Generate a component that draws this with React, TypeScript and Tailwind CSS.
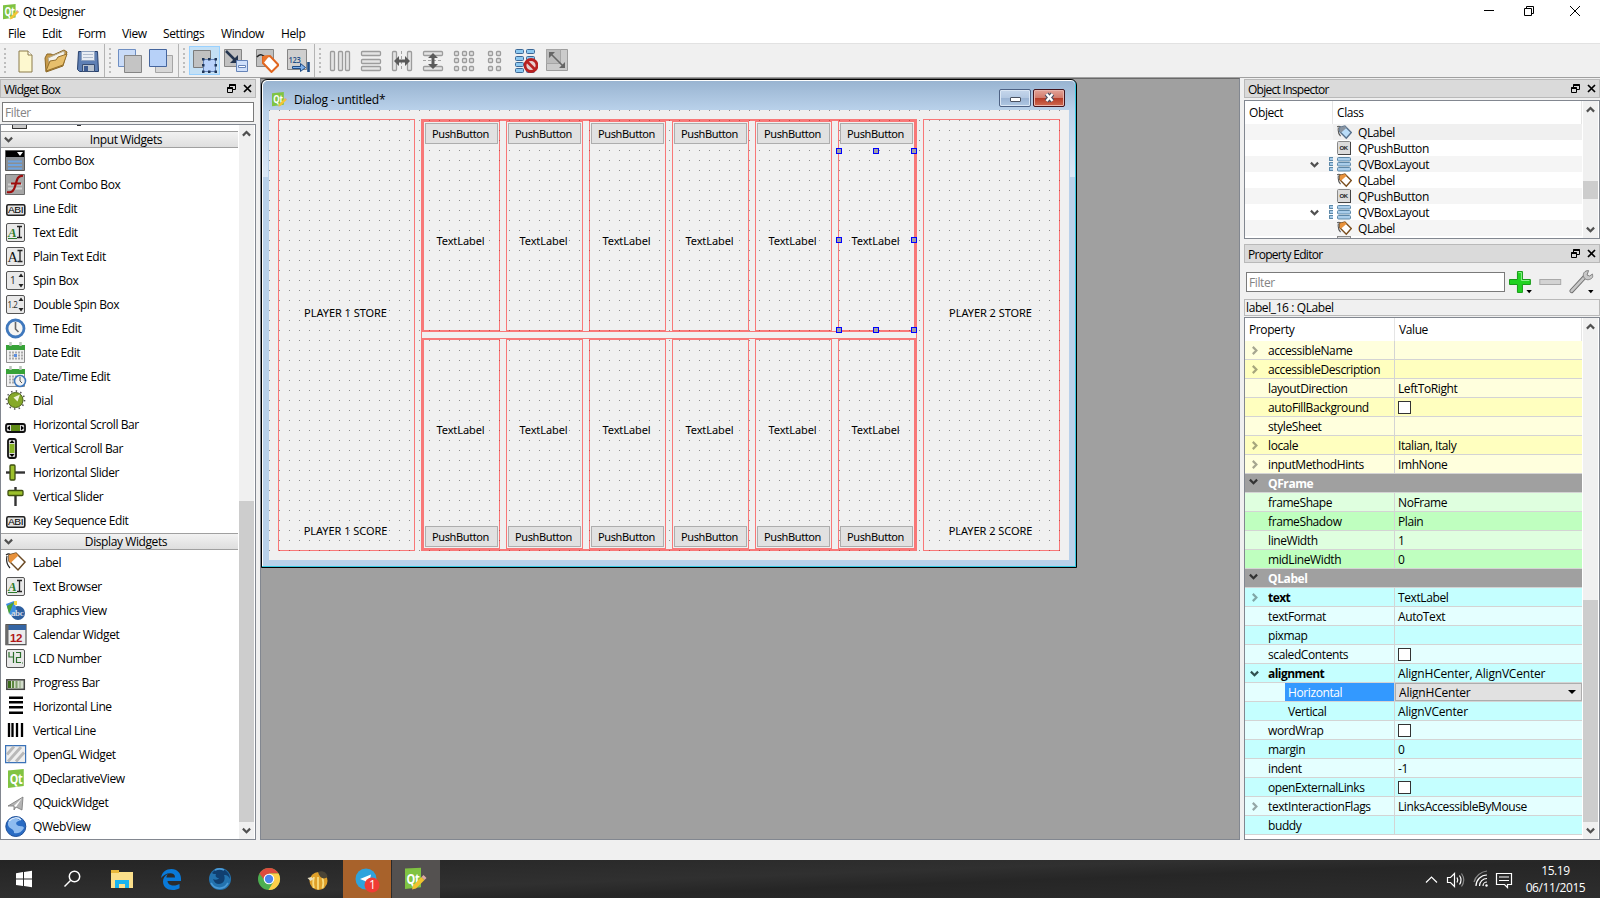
import React from "react";

type Kids = { children?: React.ReactNode };

/* ---------- shared pieces ---------- */

function Chevron({ dir, color = "#505050" }: { dir: "up" | "down" | "right"; color?: string }) {
  const d = dir === "up" ? "M.9 6.600 4.500 3 8.100 6.600" : dir === "down" ? "M.9 2.600 4.500 6.200 8.100 2.600" : "M2.800.9 6.400 4.500 2.800 8.100";
  return (
    <svg width="9" height="9" viewBox="0 0 9 9" className="block shrink-0">
      <path d={d} fill="none" stroke={color} strokeWidth="2.200" />
    </svg>
  );
}

function QtLogo({ size = 16, pencil = true }: { size?: number; pencil?: boolean }) {
  return (
    <svg width={size} height={size} viewBox="0 0 16 16" className="block shrink-0">
      <path d="M0 1.200 12.600 0v13.600L0 15.200z" fill="#80c342" />
      <text x="1.400" y="11.800" fontFamily="Open Sans, sans-serif" fontWeight="700" fontSize="11.500" fill="#fff" textLength="10" lengthAdjust="spacingAndGlyphs">Qt</text>
      {pencil && (
        <>
          <path d="m6.800 15.600.8-2.800L13.800 6.600l1.900 1.700-6.300 6.400z" fill="#f3c536" />
          <path d="m13.200 7 1-1 1.800 1.700-1 1.100z" fill="#d9a3a0" />
        </>
      )}
    </svg>
  );
}

function DockTitle({ title }: { title: string }) {
  return (
    <div className="flex h-[19px] shrink-0 items-center border border-[#b9b9b9] bg-[#dadada] pl-[3px] pr-[3px]">
      <span className="grow pt-[2px] tracking-[-0.72px]">{title}</span>
      <svg width="25" height="9" viewBox="0 0 25 9" className="block" fill="none" stroke="#000">
        <path d="M2.500 3V.5h6v5H6" />
        <path d="M2.500 1h6M.5 4h5" strokeWidth="2" />
        <path d="M.5 3.500h5v5h-5z" />
        <path d="m17 1 7 7m0-7-7 7" strokeWidth="1.700" />
      </svg>
    </div>
  );
}

function FilterBox() {
  return <div className="flex h-5 grow items-center border border-[#7a7a7a] bg-white pl-[2px] pt-[2px] text-[#848484]">Filter</div>;
}

/* ---------- toolbar ---------- */

function Handle() {
  return (
    <svg width="3" height="28" viewBox="0 0 3 28" className="block">
      {[1, 6, 10, 15, 19, 24].map((y) => (
        <rect key={y} x="0" y={y} width="2" height="2" fill="#bdbdbd" />
      ))}
    </svg>
  );
}

function Sep() {
  return <div className="h-[33px] w-px bg-[#b4b4b4]" />;
}

function Tool({ children, on }: Kids & { on?: boolean }) {
  return (
    <div className={on ? "flex h-[29px] w-[31px] items-center justify-center border border-[#99d1ff] bg-[#c4e0f5]" : "flex h-[29px] w-[31px] items-center justify-center"}>
      <svg width="24" height="24" viewBox="0 0 24 24" className="block">
        {children}
      </svg>
    </div>
  );
}

function Cells({ list }: { list: number[][] }) {
  return (
    <g fill="#e4e4e4" stroke="#9c9c9c" strokeWidth="1.300">
      {list.map(([x, y, w, h]) => (
        <rect key={`${x}-${y}`} x={x + 0.5} y={y + 0.5} width={w} height={h} rx="1" />
      ))}
    </g>
  );
}

function Toolbar() {
  return (
    <div className="flex h-[34px] shrink-0 items-center border-t border-[#e2e2e2] bg-[#f0f0f0] pl-1">
      <Handle />
      <div className="ml-[2px] flex">
        <Tool>
          <path d="M6 2h9l4 4v17H6z" fill="#fdf8cf" stroke="#8b7a4a" />
          <path d="M15 2v4h4" fill="#fff" stroke="#8b7a4a" />
        </Tool>
        <Tool>
          <path d="M1 9 3 5h4l2 1L20 1l3 2-4 14L2 23z" fill="#c79a4a" stroke="#8b6827" />
          <path d="M4 9 20 2l1 6-15 9z" fill="#f4f2ea" stroke="#b5ab8e" />
          <path d="M2 22 6 12l6-1 2-3 9-3-4 11z" fill="#e7bf6c" stroke="#96702c" />
        </Tool>
        <Tool>
          <path d="M3.500 2.500h19l1 20h-19l-2-2z" fill="#5e7fb4" stroke="#27406c" />
          <path d="M6.500 2.500h13v9h-13z" fill="#e8edf4" stroke="#8fa3c0" />
          <path d="M8 5.500h10M8 8.500h10" stroke="#b0bccd" />
          <path d="M7.500 15.500h12v7h-12z" fill="#b8c2cf" stroke="#384e74" />
          <path d="M9 17h4v5H9z" fill="#3b5a92" />
        </Tool>
      </div>
      <div className="w-[2px]" />
      <Sep />
      <div className="w-[4px]" />
      <Handle />
      <div className="ml-[2px] flex">
        <Tool>
          <path d="M.5.500h17v17H.5z" fill="#c9dbf7" stroke="#6e8ec2" />
          <path d="M6.500 6.500h17v17h-17z" fill="#c4c4c4" stroke="#858585" />
        </Tool>
        <Tool>
          <path d="M6.500 6.500h17v17h-17z" fill="#d7d7d7" stroke="#a5a5a5" />
          <path d="M.5.500h17v17H.5z" fill="#b7d1f8" stroke="#45659d" />
        </Tool>
      </div>
      <div className="w-[2px]" />
      <Sep />
      <div className="w-[4px]" />
      <Handle />
      <div className="ml-[3px] flex">
        <Tool on>
          <path d="M.5 1.500h17v17H.5z" fill="#c1c1c1" stroke="#7b7b7b" />
          <path d="M10.500 10.500h12v12h-12z" fill="#b9d2fa" stroke="#6684b8" />
          <path d="M9 9h2.500v2.500H9zM15 9h2.500v2.500H15zM21.500 9H24v2.500h-2.500zM9 15h2.500v2.500H9zM21.500 15H24v2.500h-2.500zM9 21.500h2.500V24H9zM15 21.500h2.500V24H15zM21.500 21.500H24V24h-2.500z" fill="#1f3557" />
        </Tool>
        <Tool>
          <path d="M.5.500h17v17H.5z" fill="#c1c1c1" stroke="#858585" />
          <path d="m2 2 9 9" stroke="#24354f" strokeWidth="2.500" />
          <path d="M14 14V6l-8 8z" fill="#24354f" />
          <path d="M12.500 11.500h11v11h-11z" fill="#cfe0fb" stroke="#6684b8" />
          <path d="M14.500 16.500h7v2h-7z" fill="#fff" stroke="#6684b8" />
        </Tool>
        <Tool>
          <path d="M1.500.500h17v17h-17z" fill="#c1c1c1" stroke="#858585" />
          <path d="M2 8c3-4 6-2 9 1" stroke="#222" fill="none" strokeWidth="1.500" />
          <path d="m8 8 7-1 8.500 9-7 7L8 14z" fill="#fff" stroke="#e0651f" strokeWidth="2" />
          <path d="m8 7 7-1-7 9z" fill="#e8742c" />
        </Tool>
        <Tool>
          <path d="M1.500.500h19v20h-19z" fill="#cfcfcf" stroke="#858585" />
          <text x="2.500" y="14" fontFamily="Open Sans, sans-serif" fontSize="9.500" fontWeight="600" fill="#1f4f88" textLength="12" lengthAdjust="spacingAndGlyphs">123</text>
          <path d="M6.500 17.500h8v-3l5 4-5 4v-3h-8z" fill="#7fb0ea" stroke="#1e4c86" />
          <path d="M22.500 13v10" stroke="#1e4c86" strokeWidth="2.600" />
        </Tool>
      </div>
      <div className="w-[1px]" />
      <Sep />
      <div className="w-[4px]" />
      <Handle />
      <div className="ml-[2px] flex">
        <Tool><Cells list={[[2, 2, 4, 19], [10, 2, 4, 19], [17, 2, 4, 19]]} /></Tool>
        <Tool><Cells list={[[2, 2, 19, 4], [2, 10, 19, 4], [2, 17, 19, 4]]} /></Tool>
        <Tool>
          <Cells list={[[2, 2, 4, 19], [17, 2, 4, 19]]} />
          <path d="M11.500 2v20" stroke="#a3a3a3" strokeDasharray="3 2" />
          <path d="m4 12 5-5v3.500h6V7l5 5-5 5v-3.500H9V17z" fill="#5a5a5a" />
        </Tool>
        <Tool>
          <Cells list={[[2, 2, 19, 4], [2, 17, 19, 4]]} />
          <path d="M2 11.500h20" stroke="#a3a3a3" strokeDasharray="3 2" />
          <path d="m12 4-5 5h3.500v6H7l5 5 5-5h-3.500V9H17z" fill="#5a5a5a" />
        </Tool>
        <Tool><Cells list={[2, 9, 17].flatMap((y) => [2, 10, 17].map((x) => [x, y, 4, 4]))} /></Tool>
        <Tool><Cells list={[2, 9, 17].flatMap((y) => [5, 13].map((x) => [x, y, 4, 4]))} /></Tool>
        <Tool>
          <g fill="#8cc8f0" stroke="#3c6896">
            {[0, 7, 13, 19].map((y) => (
              <g key={y}>
                <rect x="1.500" y={y + 0.5} width="8" height="4" rx="1" />
                <rect x="12.500" y={y + 0.5} width="8" height="4" rx="1" />
              </g>
            ))}
          </g>
          <circle cx="17" cy="16.500" r="6" fill="#e8cfcf" stroke="#b92020" strokeWidth="2.800" />
          <path d="m13 12.500 8 8" stroke="#b92020" strokeWidth="2.600" />
        </Tool>
        <Tool>
          <path d="M1.500.500h21v21h-21z" fill="#cbcbcb" stroke="#9d9d9d" />
          <path d="M1.500.500h14v14h-14z" fill="#bcbcbc" stroke="#a5a5a5" />
          <path d="m6 5 12 12" stroke="#666" strokeWidth="1.600" />
          <path d="M4 3h6l-6 6zM20 19h-6l6-6z" fill="#666" />
        </Tool>
      </div>
    </div>
  );
}

/* ---------- widget box ---------- */

function Plate() {
  return <rect x="1.500" y="1.500" width="18" height="18" rx="1.500" fill="#e9e9e9" stroke="#555" />;
}

function CalendarBase() {
  return (
    <>
      <path d="M1.500 3.500h18v17h-18z" fill="#f1f1f1" stroke="#8d8d8d" />
      <path d="M1 3h19v5H1z" fill="#37a237" />
      <path d="M5.500 0v4M15.500 0v4" stroke="#b9c6b9" strokeWidth="2.500" />
      <path d="M4 10.500h14M4 13.500h14M4 16.500h14" stroke="#aaa" strokeWidth="2" strokeDasharray="2 1" />
    </>
  );
}

const serif = "Liberation Serif, serif";

const glyphs: Record<string, React.ReactNode> = {
  combo: (
    <>
      <path d="M.5.500h19v20H.5z" fill="#8b8f94" stroke="#5a5a5a" />
      <path d="M1 1h18v6H1z" fill="#000" />
      <path d="M12 2h6l-3 4z" fill="#fff" />
      <path d="M3 11.500h14M3 15h14M3 18.500h14" stroke="#6fa4e0" strokeWidth="2" />
    </>
  ),
  font: (
    <>
      <path d="M.5.500h19v20H.5z" fill="#a6a6a6" stroke="#6c6c6c" />
      <path d="M3 10.500h14M3 14.500h14" stroke="#cfcfcf" strokeWidth="2" />
      <path d="M18 2c-5-1-6 3-7.500 9S7 19 2 18M6 9.500h10" fill="none" stroke="#9d0d0d" strokeWidth="2.200" />
    </>
  ),
  line: (
    <>
      <rect x="1.800" y="6.800" width="18" height="10.500" rx="1.500" fill="#e4e4e4" stroke="#222" strokeWidth="1.600" />
      <text x="3" y="15" fontFamily="Liberation Sans, sans-serif" fontSize="8.500" fill="#000" textLength="15" lengthAdjust="spacingAndGlyphs">ABI</text>
    </>
  ),
  text: (
    <>
      <Plate />
      <text x="3" y="14.500" fontFamily={serif} fontStyle="italic" fontWeight="700" fontSize="13" fill="#2c7a2c">A</text>
      <path d="M3 16.500h9" stroke="#2c7a2c" />
      <path d="M12 4.500h5M12 15.500h5M14.500 5v10" stroke="#222" strokeWidth="1.300" />
    </>
  ),
  plain: (
    <>
      <Plate />
      <text x="2.500" y="15.500" fontFamily={serif} fontSize="14.500" fill="#111">A</text>
      <path d="M12.500 4.500h5M12.500 15.500h5M15 5v10" stroke="#222" strokeWidth="1.300" />
    </>
  ),
  spin: (
    <>
      <Plate />
      <text x="5" y="14" fontFamily="Noto Sans, sans-serif" fontSize="10" fill="#333">1</text>
      <path d="m13.500 7 2.500-3.500L18.500 7zM13.500 14l2.500 3.500 2.500-3.500z" fill="#222" />
    </>
  ),
  dspin: (
    <>
      <Plate />
      <text x="2.500" y="13.500" fontFamily="Noto Sans, sans-serif" fontSize="8" fill="#333" textLength="10">1.2</text>
      <path d="m13.500 7 2.500-3.500L18.500 7zM13.500 14l2.500 3.500 2.500-3.500z" fill="#222" />
    </>
  ),
  time: (
    <>
      <circle cx="10.500" cy="10.500" r="8.500" fill="#f4f4f2" stroke="#3f78bd" strokeWidth="2.800" />
      <path d="M10.500 4v7l3 3" fill="none" stroke="#666" strokeWidth="1.600" />
    </>
  ),
  date: (
    <>
      <CalendarBase />
      <path d="M9 12h3v3H9z" fill="#5c8fe0" />
    </>
  ),
  datetime: (
    <>
      <CalendarBase />
      <circle cx="15" cy="15" r="5.500" fill="#f2f2f2" stroke="#3f78bd" strokeWidth="1.600" />
      <path d="M15 11v4l2 2" fill="none" stroke="#555" />
    </>
  ),
  dial: (
    <>
      <circle cx="10.500" cy="10" r="9" fill="none" stroke="#555" strokeWidth="1.600" strokeDasharray="1.500 3.200" />
      <circle cx="10.500" cy="10" r="7.500" fill="#86a92a" stroke="#4c6416" />
      <path d="m15 4.500-2.500 7-4-4z" fill="#f0f5d8" />
    </>
  ),
  hscroll: (
    <>
      <rect x="1" y="10" width="19" height="8" rx="2" fill="#d8d8d8" stroke="#111" strokeWidth="1.800" />
      <path d="M6 11h9v6H6z" fill="#5e8a14" />
      <path d="M5 11.500v5L2 14zM16 11.500v5l3-2.500z" fill="#000" />
    </>
  ),
  vscroll: (
    <>
      <rect x="3" y="1" width="8" height="19" rx="2" fill="#d8d8d8" stroke="#111" strokeWidth="1.800" />
      <path d="M4.500 6h5v9h-5z" fill="#86b322" />
      <path d="M4.500 5h5L7 2zM4.500 16h5L7 19z" fill="#000" />
    </>
  ),
  hslider: (
    <>
      <path d="M1 10.500h19" stroke="#333" strokeWidth="2.400" />
      <rect x="5" y="3" width="5" height="15" rx="1" fill="#9cc02c" stroke="#3d4f10" strokeWidth="1.300" />
    </>
  ),
  vslider: (
    <>
      <path d="M10.500 1v19" stroke="#333" strokeWidth="2.400" />
      <rect x="3" y="4.500" width="15" height="5" rx="1" fill="#9cc02c" stroke="#3d4f10" strokeWidth="1.300" />
    </>
  ),
  label: (
    <>
      <path d="M1 3c4-3 5 0 6 4M2 4c-1 5 0 9 3 12" fill="none" stroke="#222" strokeWidth="1.200" />
      <path d="m4 3 7-2 9 9-7 8-9-9z" fill="#fff" stroke="#6b4a24" strokeWidth="1.500" />
      <path d="m4 3 7-2 2.500 2.500L5.500 11 4 9z" fill="#e8923c" />
    </>
  ),
  graphics: (
    <>
      <circle cx="13" cy="13" r="7" fill="#2d5f9f" />
      <path d="M1 4 9 1l3 10-7 4z" fill="#3f8de0" />
      <path d="m2 6 7-4-5 12z" fill="#4aa336" />
      <path d="M9 1h3v4H9z" fill="#f2d84a" />
      <text x="6" y="16" fontFamily={serif} fontWeight="700" fontSize="9" fill="#d4dcea">abc</text>
    </>
  ),
  calendar: (
    <>
      <path d="M1 .6h20v20H1z" fill="#ececec" stroke="#555" strokeWidth="1.200" />
      <path d="M3 1h18v5H3z" fill="#3465a4" />
      <path d="M.5 1h3v20h-3z" fill="#6a6a6a" />
      <text x="5" y="18" fontFamily="Liberation Sans, sans-serif" fontWeight="700" fontSize="11.500" fill="#b01818">12</text>
    </>
  ),
  lcd: (
    <>
      <Plate />
      <path d="M4 4v5h4M8.500 4v11M11 4.500h4.500v5H11.500v5H16M17 15h1" fill="none" stroke="#2c6e2c" strokeWidth="1.200" />
    </>
  ),
  progress: (
    <>
      <rect x="1.800" y="7.800" width="17.500" height="9.500" fill="#d2dccb" stroke="#444" strokeWidth="1.500" />
      <path d="M3 9h3v7H3z" fill="#3c6a1c" />
      <path d="M7 9h2v7H7z" fill="#5c8740" />
      <path d="M10.500 9h2v7h-2z" fill="#7f9f6a" />
      <path d="M14 9h2v7h-2z" fill="#aebfa2" />
    </>
  ),
  hline: <path d="M4 1.700h14M4 6.200h14M4 11.200h14M4 16.700h14" stroke="#000" strokeWidth="2.400" />,
  vline: <path d="M4 3v14M7.500 3v14M12 3v14M17 3v14" stroke="#000" strokeWidth="2.300" />,
  opengl: (
    <>
      <path d="M.6 1.600h20v17H.6z" fill="#efefef" stroke="#3a72b8" strokeWidth="1.200" />
      <path d="m2 10.500 7-8M3 17.500 16 3M11 17.500l8-9" stroke="#b9b9b9" strokeWidth="2.800" />
    </>
  ),
  quick: (
    <>
      <path d="m3 14 15-9-1 13-6-3-2 3v-4z" fill="#b4b4b4" stroke="#777" strokeWidth=".8" />
      <path d="m9 14 8-8-6 9z" fill="#fff" />
    </>
  ),
  web: (
    <>
      <circle cx="10.800" cy="10.500" r="10" fill="#2a6cc4" stroke="#1e4f98" />
      <path d="M3 6c5-5 10-4 12-1-3 0-5 2-3 4s6 0 7 3c-3 5-7 6-10 5 1-4-5-4-6-8z" fill="#8fbcf0" />
      <path d="M4 5c4-4 9-4 12-1" stroke="#dcebfb" fill="none" strokeWidth="1.500" />
    </>
  ),
};

const inputWidgets: [string, string][] = [
  ["combo", "Combo Box"], ["font", "Font Combo Box"], ["line", "Line Edit"], ["text", "Text Edit"],
  ["plain", "Plain Text Edit"], ["spin", "Spin Box"], ["dspin", "Double Spin Box"], ["time", "Time Edit"],
  ["date", "Date Edit"], ["datetime", "Date/Time Edit"], ["dial", "Dial"], ["hscroll", "Horizontal Scroll Bar"],
  ["vscroll", "Vertical Scroll Bar"], ["hslider", "Horizontal Slider"], ["vslider", "Vertical Slider"],
  ["line", "Key Sequence Edit"],
];

const displayWidgets: [string, string][] = [
  ["label", "Label"], ["text", "Text Browser"], ["graphics", "Graphics View"], ["calendar", "Calendar Widget"],
  ["lcd", "LCD Number"], ["progress", "Progress Bar"], ["hline", "Horizontal Line"], ["vline", "Vertical Line"],
  ["opengl", "OpenGL Widget"], ["qt", "QDeclarativeView"], ["quick", "QQuickWidget"], ["web", "QWebView"],
];

function Category({ title }: { title: string }) {
  return (
    <div className="mb-px flex h-[17px] shrink-0 items-center border-y border-[#a0a0a0] bg-gradient-to-b from-[#f2f2f2] to-[#dedede] pl-[3px]">
      <Chevron dir="down" />
      <span className="grow pl-[1px] pt-px text-center">{title}</span>
    </div>
  );
}

function WidgetRow({ icon, name }: { icon: string; name: string }) {
  return (
    <div className="flex h-6 shrink-0 items-center pl-1">
      {icon === "qt" ? (
        <div className="w-[22px] pl-[3px]"><QtLogo size={20} pencil={false} /></div>
      ) : (
        <svg width="22" height="22" viewBox="0 0 22 22" className="block">{glyphs[icon]}</svg>
      )}
      <span className="pl-[6px]">{name}</span>
    </div>
  );
}

function WidgetBox() {
  return (
    <div className="flex w-64 shrink-0 flex-col">
      <DockTitle title="Widget Box" />
      <div className="flex px-[2px] pt-1 pb-[2px]"><FilterBox /></div>
      <div className="flex h-[716px] border border-[#828790] bg-white">
        <div className="flex w-[237px] flex-col overflow-hidden">
          <div className="flex h-[6px] shrink-0 items-start pl-[11px]">
            <div className="h-[4px] w-[15px] border border-t-0 border-[#333] bg-[#c9c9c9]" />
            <div className="ml-[50px] h-px w-[4px] bg-[#333]" />
          </div>
          <Category title="Input Widgets" />
          {inputWidgets.map(([i, n]) => <WidgetRow key={n} icon={i} name={n} />)}
          <Category title="Display Widgets" />
          {displayWidgets.map(([i, n]) => <WidgetRow key={n} icon={i} name={n} />)}
        </div>
        <div className="ml-px flex w-[15px] flex-col items-center bg-[#f0f0f0]">
          <div className="flex h-[376px] items-start pt-[4px]"><Chevron dir="up" /></div>
          <div className="h-[321px] w-full bg-[#cdcdcd]" />
          <div className="pt-1"><Chevron dir="down" /></div>
        </div>
      </div>
    </div>
  );
}

/* ---------- form window ---------- */

function PushButton() {
  return (
    <div className="flex h-[21px] shrink-0 items-center justify-center border border-[#adadad] bg-[#e1e1e1] pr-[2px] tracking-[-0.4px]">PushButton</div>
  );
}

const handleSpots = [
  "left-[-3px] top-[-3px]", "left-[34px] top-[-3px]", "left-[72px] top-[-3px]",
  "left-[-3px] top-[86px]", "left-[72px] top-[86px]",
  "left-[-3px] top-[176px]", "left-[34px] top-[176px]", "left-[72px] top-[176px]",
];

function Cell({ bottom, selected }: { bottom?: boolean; selected?: boolean }) {
  return (
    <div className={bottom ? "flex w-[77px] flex-col-reverse border border-[#ff0000]/50 p-px" : "flex w-[77px] flex-col border border-[#ff0000]/50 p-px"}>
      <PushButton />
      <div className={bottom ? "-mx-px mb-[7px] flex grow items-center justify-center pr-[2px] tracking-[-0.1px]" : "relative -mx-px mt-[7px] flex grow items-center justify-center pr-[2px] pt-[2px] tracking-[-0.1px]"}>
        TextLabel
        {selected && handleSpots.map((s) => <i key={s} className={`absolute size-[6px] border border-[#0000ff] bg-[#a0a0a4] ${s}`} />)}
      </div>
    </div>
  );
}

function CellRow({ bottom }: { bottom?: boolean }) {
  return (
    <div className="flex h-[212px] gap-[6px] border border-[#ff0000]/50">
      {[0, 1, 2, 3, 4, 5].map((i) => <Cell key={i} bottom={bottom} selected={!bottom && i === 5} />)}
    </div>
  );
}

function Store({ n }: { n: number }) {
  return (
    <div className="flex w-[137px] flex-col items-center border border-[#ff0000]/50 pr-[2px] pt-[184px] leading-[18px] tracking-[-0.05px]">
      <span>PLAYER {n} STORE</span>
      <span className="mt-[200px]">PLAYER {n} SCORE</span>
    </div>
  );
}

function FormWindow() {
  return (
    <div className="flex h-[489px] w-[816px] flex-col rounded-t-[6px] border border-black bg-[#b9d1ea] shadow-[inset_-1px_-1px_0_#35c8e0,inset_1px_1px_0_#ffffff]">
      <div className="mx-px mt-px flex h-[29px] shrink-0 items-center rounded-t-[5px] bg-gradient-to-b from-[#99b4d1] to-[#b9d1ea] pl-[9px] pr-[10px]">
        <div className="pt-[7px]"><QtLogo size={15} /></div>
        <span className="grow pl-[7px] pt-[8px] text-[12px] tracking-[-0.22px]">Dialog - untitled*</span>
        <div className="mt-[4px] flex h-[18px] w-8 items-center justify-center rounded-[2px] border border-[#4e6284] bg-[linear-gradient(#c6d7ec_0%,#b3c8e2_48%,#9ab3d3_50%,#b0c8e3_100%)] shadow-[inset_0_0_0_1px_#dbe7f5]">
          <div className="mt-[3px] h-[5px] w-[11px] rounded-[1px] border border-[#4a5160] bg-white" />
        </div>
        <div className="ml-[2px] mt-[4px] flex h-[18px] w-8 items-center justify-center rounded-[2px] border border-[#43141d] bg-[linear-gradient(#e3a398_0%,#d27c6d_48%,#b53a26_50%,#cf6a50_100%)] shadow-[inset_0_0_0_1px_#e9b5ac]">
          <svg width="13" height="11" viewBox="0 0 13 11">
            <path d="m3.500 2 6 7m0-7-6 7" stroke="#4a4f62" strokeWidth="4.600" />
            <path d="m3.500 2 6 7m0-7-6 7" stroke="#fff" strokeWidth="2.400" />
          </svg>
        </div>
      </div>
      <div className="flex">
        <div className="ml-px h-[67px] w-[5px] bg-gradient-to-b from-[#b9d1ea] to-[#dce8f6]" />
        <div className="ml-px flex h-[450px] w-[800px] bg-[#f0f0f0] bg-[linear-gradient(90deg,transparent_1px,#f0f0f0_1px),linear-gradient(#8f8f8f_1px,transparent_1px)] bg-[size:10px_10px] pl-[9px] pt-[9px] font-['Noto_Sans',sans-serif] text-[11px]">
          <div className="flex h-[432px]">
            <Store n={1} />
            <div className="ml-[6px] flex w-[496px] flex-col gap-[6px] border border-[#ff0000]/50">
              <CellRow />
              <CellRow bottom />
            </div>
            <div className="ml-[6px] flex"><Store n={2} /></div>
          </div>
        </div>
        <div className="ml-px h-[67px] w-[5px] bg-gradient-to-b from-[#b9d1ea] to-[#dce8f6]" />
      </div>
    </div>
  );
}

/* ---------- object inspector ---------- */

function TreeIcon({ kind }: { kind: string }) {
  if (kind === "QPushButton")
    return (
      <svg width="15" height="15" viewBox="0 0 15 15" className="block">
        <rect x=".5" y=".5" width="13" height="13" rx="1" fill="#dcdcdc" stroke="#8a8a8a" />
        <path d="M1 13.500h13M13.500 1v13" stroke="#444" />
        <text x="2.500" y="9" fontFamily="Liberation Sans, sans-serif" fontWeight="700" fontSize="6" fill="#222">OK</text>
      </svg>
    );
  if (kind === "QVBoxLayout")
    return (
      <svg width="15" height="15" viewBox="0 0 15 15" className="block" fill="#a9cdea" stroke="#5d88a8">
        <rect x=".5" y=".5" width="13" height="3.500" rx="1" />
        <rect x=".5" y="5.500" width="13" height="3.500" rx="1" />
        <rect x=".5" y="10.500" width="13" height="3.500" rx="1" />
      </svg>
    );
  const blue = kind === "selected";
  return (
    <svg width="15" height="15" viewBox="0 0 21 20" className="block">
      <path d="M0 2c4-2 6 0 7 5M2 3c-1 5 0 9 3 12" fill="none" stroke="#555" strokeWidth="1.500" />
      <path d="m4 3 7-2 9 9-7 8-9-9z" fill={blue ? "#b9dcf8" : "#fff"} stroke={blue ? "#56708c" : "#7a4d1c"} strokeWidth="2" />
      <path d="m4 3 7-2 2.500 2.500-8 7L4 9z" fill={blue ? "#8a94a0" : "#e8923c"} />
    </svg>
  );
}

const treeRows = ["QLabel", "QPushButton", "QVBoxLayout", "QLabel", "QPushButton", "QVBoxLayout", "QLabel"];

function ObjectInspector() {
  return (
    <div className="flex flex-col">
      <DockTitle title="Object Inspector" />
      <div className="mt-[2px] flex h-[139px] border border-[#828790] bg-white">
        <div className="flex w-[337px] flex-col overflow-hidden">
          <div className="flex h-[23px] shrink-0 items-center">
            <span className="w-[87px] pl-1">Object</span>
            <span className="flex h-full w-[250px] items-center border-x border-[#e5e5e5] pl-1">Class</span>
          </div>
          {treeRows.map((r, i) => (
            <div key={i} className={i % 2 ? "flex h-4 shrink-0 bg-white" : "flex h-4 shrink-0 bg-[#f5f5f5]"}>
              <div className="flex w-[88px] items-center justify-end">
                {r === "QVBoxLayout" && (
                  <>
                    <Chevron dir="down" />
                    <div className="ml-[10px] flex h-[14px] w-1 flex-col justify-between">
                      {[0, 1, 2].map((k) => <i key={k} className="h-[4px] rounded-l-[1px] border border-r-0 border-[#5d88a8] bg-[#a9cdea]" />)}
                    </div>
                  </>
                )}
              </div>
              <div className={i === 0 ? "flex grow items-center bg-[#f0f0f0] pl-1" : "flex grow items-center pl-1"}>
                <TreeIcon kind={i === 0 ? "selected" : r} />
                <span className="pl-[6px] pt-[2px]">{r}</span>
              </div>
            </div>
          ))}
          <div className="ml-[92px] h-2 w-[14px] shrink-0 border border-[#8a8a8a] bg-[#dcdcdc]" />
        </div>
        <div className="ml-px flex w-[15px] flex-col items-center bg-[#f0f0f0]">
          <div className="h-20 pt-[4px]"><Chevron dir="up" /></div>
          <div className="h-[18px] w-full bg-[#cdcdcd]" />
          <div className="pt-[26px]"><Chevron dir="down" /></div>
        </div>
      </div>
    </div>
  );
}

/* ---------- property editor ---------- */

type Prop = { n: string; v?: string; check?: boolean; exp?: "right" | "down"; bold?: boolean; head?: boolean; sub?: boolean; sel?: boolean; wide?: boolean; bg?: string };

const Y1 = "bg-[#ffffdd]", Y2 = "bg-[#ffffbf]", G1 = "bg-[#dfffdf]", G2 = "bg-[#bfffbf]", C1 = "bg-[#e4ffff]", C2 = "bg-[#c5ffff]";

const props: Prop[] = [
  { n: "accessibleName", exp: "right", bg: Y1 },
  { n: "accessibleDescription", exp: "right", bg: Y2 },
  { n: "layoutDirection", v: "LeftToRight", bg: Y1 },
  { n: "autoFillBackground", check: true, bg: Y2 },
  { n: "styleSheet", bg: Y1 },
  { n: "locale", v: "Italian, Italy", exp: "right", bg: Y2 },
  { n: "inputMethodHints", v: "ImhNone", exp: "right", bg: Y1 },
  { n: "QFrame", head: true },
  { n: "frameShape", v: "NoFrame", bg: G1 },
  { n: "frameShadow", v: "Plain", bg: G2 },
  { n: "lineWidth", v: "1", bg: G1 },
  { n: "midLineWidth", v: "0", bg: G2 },
  { n: "QLabel", head: true },
  { n: "text", v: "TextLabel", exp: "right", bold: true, bg: C2 },
  { n: "textFormat", v: "AutoText", bg: C1 },
  { n: "pixmap", bg: C2 },
  { n: "scaledContents", check: true, bg: C1 },
  { n: "alignment", v: "AlignHCenter, AlignVCenter", exp: "down", bold: true, wide: true, bg: C2 },
  { n: "Horizontal", v: "AlignHCenter", sub: true, sel: true, bg: C1 },
  { n: "Vertical", v: "AlignVCenter", sub: true, wide: true, bg: C2 },
  { n: "wordWrap", check: true, bg: C1 },
  { n: "margin", v: "0", bg: C2 },
  { n: "indent", v: "-1", bg: C1 },
  { n: "openExternalLinks", check: true, bg: C2 },
  { n: "textInteractionFlags", v: "LinksAccessibleByMouse", exp: "right", bg: C1 },
  { n: "buddy", bg: C2 },
];

function PropRow({ p }: { p: Prop }) {
  if (p.head)
    return (
      <div className="flex h-[19px] shrink-0 items-center border-b border-[#d4d4d4] bg-[#a0a0a0] pl-[4px] font-bold text-white">
        <div className="-mt-1"><Chevron dir="down" color="#333" /></div>
        <span className="pl-[10px] pt-[2px]">{p.n}</span>
      </div>
    );
  return (
    <div className={`flex h-[19px] shrink-0 border-b border-[#d4d4d4] ${p.bg}`}>
      <div className="flex w-[150px] items-center border-r border-[#d4d4d4]">
        {p.sub ? (
          <div className={p.sel ? "ml-10 flex h-full grow items-center bg-[#3399ff] pl-[3px] pt-[2px] text-white" : "ml-10 flex h-full grow items-center pl-[3px] pt-[2px]"}>{p.n}</div>
        ) : (
          <>
            <div className="w-[23px] pl-[5px] pt-px">{p.exp && <Chevron dir={p.exp} color={p.exp === "right" ? "#00000059" : "#2f5050"} />}</div>
            <span className={p.bold ? "pt-[2px] font-bold tracking-[-0.55px]" : "pt-[2px]"}>{p.n}</span>
          </>
        )}
      </div>
      {p.sel ? (
        <div className="flex grow items-center justify-between border border-[#adadad] bg-[#e1e1e1] pl-[3px] pr-[5px]">
          <span className="h-[14px] overflow-hidden leading-[16px] tracking-[-0.2px]">{p.v}</span>
          <i className="border-x-4 border-t-4 border-x-transparent border-t-black" />
        </div>
      ) : (
        <div className="flex grow items-center pl-[3px]">
          {p.check ? <i className="size-[13px] border border-[#333] bg-white" /> : <span className={p.wide ? "pt-[2px] tracking-[-0.2px]" : "pt-[2px]"}>{p.v}</span>}
        </div>
      )}
    </div>
  );
}

function PropertyEditor() {
  return (
    <div className="mt-[5px] flex flex-col">
      <DockTitle title="Property Editor" />
      <div className="flex h-9 items-center pl-[2px] pt-[2px]">
        <div className="flex w-[260px]"><FilterBox /></div>
        <svg width="92" height="26" viewBox="0 0 92 26" className="ml-1 block">
          <path d="M8.500 2.500h5v8h8v5h-8v8h-5v-8h-8v-5h8z" fill="#21d321" stroke="#169a16" />
          <path d="M9.500 3.500h3v8h8" fill="none" stroke="#8df08d" />
          <path d="M17.500 21h5.500l-2.700 3.200zM79.500 21H85l-2.700 3.200z" fill="#000" />
          <rect x="31" y="10.500" width="21" height="5" fill="#d3d3d3" stroke="#a8a8a8" />
          <path d="m63 22 13-14" stroke="#6f6f6f" strokeWidth="4.500" strokeLinecap="round" />
          <path d="m63 22 13-14" stroke="#c7c7c7" strokeWidth="2.600" strokeLinecap="round" />
          <path d="M80 1.500c-4 0-6 3-5 6s4 4 7 2.500 2-3 2-5l-3 2-2.500-1z" fill="#c9c9c9" stroke="#808080" />
        </svg>
      </div>
      <div className="flex h-[17px] items-center border border-[#b9b9b9] pl-px pt-px">label_16 : QLabel</div>
      <div className="mt-px flex h-[523px] border border-[#828790] bg-white">
        <div className="flex w-[337px] flex-col overflow-hidden">
          <div className="flex h-[23px] shrink-0 items-center">
            <span className="w-[149px] pl-1 pt-px">Property</span>
            <span className="flex h-full grow items-center border-x border-[#e5e5e5] pl-1 pt-px">Value</span>
          </div>
          {props.map((p) => <PropRow key={p.n} p={p} />)}
        </div>
        <div className="ml-px flex w-[15px] flex-col items-center bg-[#f0f0f0]">
          <div className="h-[282px] pt-[4px]"><Chevron dir="up" /></div>
          <div className="h-[222px] w-full bg-[#cdcdcd]" />
          <div className="pt-1"><Chevron dir="down" /></div>
        </div>
      </div>
    </div>
  );
}

/* ---------- taskbar ---------- */

function Task({ children, tone = "w-[49px]" }: Kids & { tone?: string }) {
  return (
    <div className={`flex h-full items-center justify-center pr-[2px] ${tone}`}>
      <svg width="24" height="24" viewBox="0 0 24 24" className="block overflow-visible">{children}</svg>
    </div>
  );
}

function Taskbar() {
  return (
    <div className="flex h-[38px] shrink-0 bg-[#292929] bg-[linear-gradient(178deg,#242424,#303030_45%,#262626_60%,#2e2e2e)]">
      <Task><path d="M4 6.200 11 5v6.500H4zM12 4.900 20 3.800v7.700h-8zM4 12.500h7V19l-7-1.100zM12 12.500h8v7.700l-8-1.200z" fill="#fff" /></Task>
      <Task>
        <circle cx="13.500" cy="9.500" r="5.200" fill="none" stroke="#fff" strokeWidth="1.500" />
        <path d="m9.500 13.500-6 6" stroke="#fff" strokeWidth="1.500" />
      </Task>
      <Task>
        <path d="M1 3h8v2h14v16H1z" fill="#fbdf8a" />
        <path d="M1 3h8v3H1z" fill="#e9b83c" />
        <path d="M5 21v-8h14v8h-4v-4H9v4z" fill="#18b4ef" />
      </Task>
      <Task>
        <path d="M2 11C3 5 7 2 12.500 2 18.500 2 22 6.500 22 11.500V14H8.500c.2 3 3 4.500 6 4.500 2.500 0 4.500-.7 6-1.500v4.200C18.500 22.400 16.300 23 13.700 23 8 23 4 19.500 4 14.500c0-3.500 2-6 5-7.500-1 1-1.500 2.300-1.600 3.500H16c0-3-1.700-4.300-4.800-4.300C7.500 6.200 4 8.300 2 11z" fill="#0a7ad8" />
      </Task>
      <Task>
        <circle cx="12" cy="12" r="11" fill="#2372ae" />
        <path d="M4 6c3-4 9-5 13-3 3 2 5 5 5 9-2-4-4-4-6-4 2 5-1 9-5 9-3 0-5-2-6-5 2 1 5 1 6-1-3 0-4-2-3-4-2 0-3 0-4-1z" fill="#103f70" />
        <path d="M3 16c4 7 13 7 17 0M7 3c3-1.500 6-1.500 9 0" stroke="#4b9ad6" strokeWidth="1.600" fill="none" />
      </Task>
      <Task>
        <circle cx="12" cy="12" r="11" fill="#4caf50" />
        <path d="M12 1a11 11 0 0 1 9.600 5.600H12L8 14 2.400 6.600A11 11 0 0 1 12 1z" fill="#dd4b3e" />
        <path d="M12 6.600h9.600A11 11 0 0 1 11.500 23L17 14z" fill="#fcd04a" />
        <circle cx="12" cy="12" r="5.300" fill="#fff" />
        <circle cx="12" cy="12" r="4.200" fill="#4a84ee" />
      </Task>
      <Task>
        <circle cx="12.500" cy="14" r="9" fill="#dfa02a" />
        <path d="M8 10c-1 4-1 8 0 11M12 10v12.500M16.500 11c1 3 1 7 0 10.500" stroke="#f7dc80" strokeWidth="1.800" fill="none" />
        <path d="M12 5c4-2 9 0 9.500 5-4 3-8 1-9.500-5z" fill="#4a4436" />
        <path d="m1.500 11 4-1 2 2-3 2z" fill="#e7dfc2" />
      </Task>
      <Task tone="w-[48px] bg-[#a8622b]">
        <circle cx="12" cy="12" r="10.500" fill="#2fa3dc" />
        <path d="M6 12 17 7.500l-2 10-4-3.500z" fill="#fff" />
        <circle cx="18" cy="18" r="7.500" fill="#f03c35" />
        <text x="15" y="22.300" fontFamily="Open Sans, sans-serif" fontSize="12" fill="#fff">1</text>
      </Task>
      <Task tone="ml-px w-[48px] bg-[#545150]">
        <path d="M2 1.500 18 .8v19.400L2 22z" fill="#80c342" />
        <text x="3.500" y="16.500" fontFamily="Open Sans, sans-serif" fontWeight="700" fontSize="15" fill="#fff" textLength="13" lengthAdjust="spacingAndGlyphs">Qt</text>
        <path d="m9 22.500 1-4L18.500 10l3 3-8.500 8.500z" fill="#f2c22e" />
        <path d="m18.500 10 2-2 3 3-2 2z" fill="#dba8a4" />
      </Task>
      <div className="grow" />
      <svg width="90" height="38" viewBox="0 0 90 38" className="block" fill="none" stroke="#fff" strokeWidth="1.200">
        <path d="m2 22.500 5.500-5.500 5.500 5.500" />
        <path d="M23.500 17.500h3l4-4v13l-4-4h-3z" />
        <path d="M33 17.500q1.500 2.500 0 5M35.500 15.500q3 4.500 0 9" />
        <path d="M37.500 13.500q4.500 6.500 0 13" stroke="#888" />
        <path d="M52 26a11 11 0 0 1 11-11M55.500 26a7.500 7.500 0 0 1 7.500-7.500M59 26a4 4 0 0 1 4-4" />
        <path d="M50 22a15 15 0 0 1 13-11" stroke="#888" />
        <circle cx="62.500" cy="25.500" r="1.200" fill="#fff" stroke="none" />
        <path d="M72.500 13.500h15v11h-4v3l-3-3h-8zM75 17h10M75 20.500h10" />
      </svg>
      <div className="ml-[4px] flex w-[82px] flex-col items-center pr-[7px] pt-[3px] leading-[16.500px] text-white">
        <span>15.19</span>
        <span>06/11/2015</span>
      </div>
    </div>
  );
}

/* ---------- application ---------- */

const menus: [string, string][] = [
  ["File", "w-[34px]"], ["Edit", "w-[36px]"], ["Form", "w-[44px]"], ["View", "w-[41px]"],
  ["Settings", "w-[58px]"], ["Window", "w-[60px]"], ["Help", "w-[40px]"],
];

export default function App() {
  return (
    <div className="flex h-[898px] w-[1600px] flex-col overflow-hidden bg-[#f0f0f0] font-['Open_Sans',sans-serif] text-[12px] leading-4 tracking-[-0.4px] text-black">
      <div className="flex h-[23px] shrink-0 items-center bg-white pl-[3px]">
        <QtLogo size={16} />
        <span className="grow pl-1">Qt Designer</span>
        <svg width="120" height="20" viewBox="0 0 120 20" fill="none" stroke="#000">
          <path d="M4 8.500h10M44.500 6.500h7v7h-7zM46.500 6.500v-2h7v7h-2M90 4l10 10m0-10-10 10" />
        </svg>
      </div>
      <div className="flex h-[20px] shrink-0 items-center bg-white pl-2 pt-[2px]">
        {menus.map(([m, w]) => <span key={m} className={w}>{m}</span>)}
      </div>
      <Toolbar />
      <div className="h-[2px] shrink-0 border-t border-[#a0a0a0] bg-[#f0f0f0]" />
      <div className="flex h-[761px] shrink-0">
        <WidgetBox />
        <div className="-mt-px ml-1 w-[980px] border border-[#828790] border-t-[#696969] bg-[#a0a0a0]">
          <FormWindow />
        </div>
        <div className="ml-1 flex w-[356px] flex-col">
          <ObjectInspector />
          <PropertyEditor />
        </div>
      </div>
      <div className="h-[20px] shrink-0" />
      <Taskbar />
    </div>
  );
}
